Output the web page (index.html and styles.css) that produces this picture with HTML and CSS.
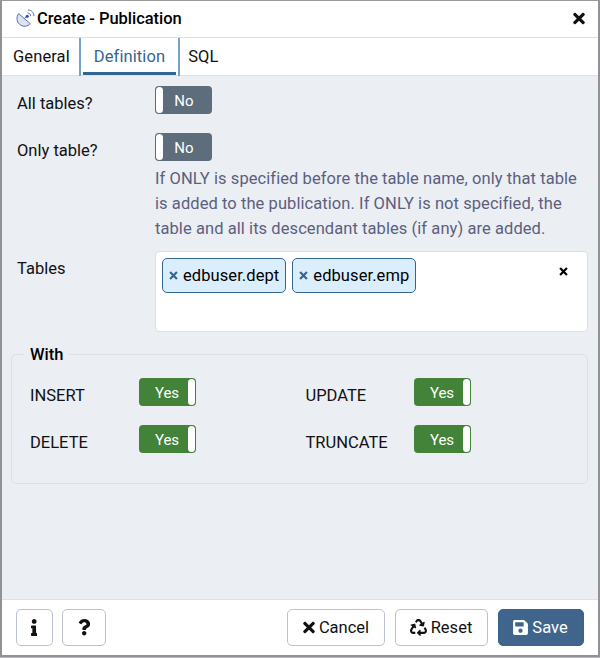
FILE: index.html
```html
<!DOCTYPE html>
<html lang="en">
<head>
<meta charset="utf-8">
<title>Create - Publication</title>
<link rel="stylesheet" href="styles.css">
</head>
<body>
<svg class="defs" width="0" height="0">
  <symbol id="times" viewBox="0 0 352 512"><path d="M242.72 256l100.07-100.07c12.28-12.28 12.28-32.19 0-44.48l-22.24-22.24c-12.28-12.28-32.19-12.28-44.48 0L176 189.28 75.93 89.21c-12.28-12.28-32.19-12.28-44.48 0L9.21 111.45c-12.28 12.28-12.28 32.19 0 44.48L109.28 256 9.21 356.07c-12.28 12.28-12.28 32.19 0 44.48l22.24 22.24c12.28 12.28 32.2 12.28 44.48 0L176 322.72l100.07 100.07c12.28 12.28 32.2 12.28 44.48 0l22.24-22.24c12.28-12.28 12.28-32.19 0-44.48L242.72 256z"/></symbol>
  <symbol id="cross" viewBox="0 0 10 10"><path d="M1.2 1.200l7.600 7.600M8.800 1.200l-7.600 7.600" fill="none" stroke="currentColor" stroke-width="2.400"/></symbol>
</svg>
<main class="dialog">
  <header class="titlebar">
    <svg class="dish" viewBox="0 0 19 19" fill="none" stroke="#5c6cb4" stroke-width="1">
      <path d="M2.700 4.600L14.200 14.700C11.800 17.700 7 18.200 3.700 15.500C.5 12.800.1 7.800 2.700 4.600Z" fill="#dce3f3"/>
      <path d="M8.300 9.500L11 7.300"/>
      <circle cx="11.200" cy="7.200" r="1.500" fill="#2447b5" stroke="none"/>
      <path d="M11.600 4.100C13.400 4 14.700 5.300 14.700 7.100M12 1.100C15.500.9 18 3.500 17.800 7"/>
    </svg>
    <h1 class="title">Create - Publication</h1>
    <svg class="close"><use href="#times"/></svg>
  </header>
  <nav class="tabs">
    <div class="tab">General</div>
    <div class="tab active"><span class="tab-label">Definition</span></div>
    <div class="tab">SQL</div>
  </nav>
  <section class="content">
    <div class="row">
      <div class="label">All tables?</div>
      <div class="switch off"><span class="knob"></span><span class="state">No</span></div>
    </div>
    <div class="row only">
      <div class="label">Only table?</div>
      <div class="control">
        <div class="switch off"><span class="knob"></span><span class="state">No</span></div>
        <p class="help">If ONLY is specified before the table name, only that table<br>is added to the publication. If ONLY is not specified, the<br>table and all its descendant tables (if any) are added.</p>
      </div>
    </div>
    <div class="row tables">
      <div class="label">Tables</div>
      <div class="select">
        <div class="chip"><svg class="remove"><use href="#cross"/></svg>edbuser.dept</div>
        <div class="chip"><svg class="remove"><use href="#cross"/></svg>edbuser.emp</div>
        <svg class="clear"><use href="#cross"/></svg>
      </div>
    </div>
    <fieldset class="group">
      <legend class="legend">With</legend>
      <div class="options">
        <div class="label">INSERT</div>
        <div class="switch on"><span class="state">Yes</span><span class="knob"></span></div>
        <div class="label">UPDATE</div>
        <div class="switch on"><span class="state">Yes</span><span class="knob"></span></div>
        <div class="label">DELETE</div>
        <div class="switch on"><span class="state">Yes</span><span class="knob"></span></div>
        <div class="label">TRUNCATE</div>
        <div class="switch on"><span class="state">Yes</span><span class="knob"></span></div>
      </div>
    </fieldset>
  </section>
  <footer class="footer">
    <div class="btn info"><svg width="6.400" height="17" viewBox="0 0 192 512"><path d="M20 424.229h20V279.771H20c-11.046 0-20-8.954-20-20V212c0-11.046 8.954-20 20-20h112c11.046 0 20 8.954 20 20v212.229h20c11.046 0 20 8.954 20 20V492c0 11.046-8.954 20-20 20H20c-11.046 0-20-8.954-20-20v-47.771c0-11.046 8.954-20 20-20zM96 0C56.235 0 24 32.235 24 72s32.235 72 72 72 72-32.235 72-72S135.764 0 96 0z"/></svg></div>
    <div class="btn question"><svg width="12.400" height="16.500" viewBox="0 0 384 512"><path d="M202.021 0C122.202 0 70.503 32.703 29.914 91.026c-7.363 10.58-5.093 25.086 5.178 32.874l43.138 32.709c10.373 7.865 25.132 6.026 33.253-4.148 25.049-31.381 43.630-49.449 82.757-49.449 30.764 0 68.816 19.799 68.816 49.631 0 22.552-18.617 34.134-48.993 51.164-35.423 19.860-82.299 44.576-82.299 106.405V320c0 13.255 10.745 24 24 24h72.471c13.255 0 24-10.745 24-24v-5.773c0-42.860 125.268-44.645 125.268-160.627C377.504 66.256 286.902 0 202.021 0zM192 373.459c-38.196 0-69.271 31.075-69.271 69.271 0 38.195 31.075 69.270 69.271 69.270s69.271-31.075 69.271-69.271-31.075-69.270-69.271-69.270z"/></svg></div>
    <div class="spacer"></div>
    <div class="btn cancel"><svg width="12" height="17"><use href="#times"/></svg>Cancel</div>
    <div class="btn reset"><svg width="17" height="17" viewBox="0 0 512 512"><path d="M184.561 261.903c3.232 13.997-12.123 24.635-24.068 17.168l-40.736-25.455-50.867 81.402C55.606 356.273 70.960 384 96.012 384H148c6.627 0 12 5.373 12 12v40c0 6.627-5.373 12-12 12H96.115c-75.334 0-121.302-83.048-81.408-146.880l50.822-81.388-40.725-25.448c-12.081-7.547-8.966-25.961 4.879-29.158l110.237-25.450c8.611-1.988 17.201 3.381 19.189 11.990l25.452 110.237zm98.561-182.915l41.289 66.076-40.740 25.457c-12.051 7.528-9 25.953 4.879 29.158l110.237 25.450c8.672 1.999 17.215-3.438 19.189-11.990l25.450-110.237c3.197-13.844-11.990-24.719-24.068-17.168l-40.687 25.424-41.263-66.082c-37.521-60.033-125.209-60.171-162.816 0l-17.963 28.766c-3.510 5.620-1.800 13.021 3.820 16.533l33.919 21.195c5.620 3.512 13.024 1.803 16.536-3.817l17.961-28.743c12.712-20.341 41.973-19.676 54.257-.022zM497.288 301.120l-27.515-44.065c-3.511-5.623-10.916-7.334-16.538-3.821l-33.861 21.159c-5.620 3.512-7.330 10.915-3.818 16.536l27.564 44.112c13.257 21.211-2.057 48.960-27.136 48.960H320V336.020c0-14.213-17.242-21.383-27.313-11.313l-80 79.981c-6.249 6.248-6.249 16.379 0 22.627l80 79.989C302.689 517.308 320 510.300 320 495.989V448h95.880c75.274 0 121.335-82.997 81.408-146.880z"/></svg>Reset</div>
    <div class="btn save"><svg width="15" height="17" viewBox="0 0 448 512"><path d="M433.941 129.941l-83.882-83.882A48 48 0 0 0 316.118 32H48C21.490 32 0 53.490 0 80v352c0 26.510 21.490 48 48 48h352c26.510 0 48-21.490 48-48V163.882a48 48 0 0 0-14.059-33.941zM224 416c-35.346 0-64-28.654-64-64 0-35.346 28.654-64 64-64s64 28.654 64 64c0 35.346-28.654 64-64 64zm96-304.520V212c0 6.627-5.373 12-12 12H76c-6.627 0-12-5.373-12-12V108c0-6.627 5.373-12 12-12h228.520c3.183 0 6.235 1.264 8.485 3.515l3.480 3.480A11.996 11.996 0 0 1 320 111.480z"/></svg>Save</div>
  </footer>
</main>
</body>
</html>
```
FILE: styles.css
```css
* { box-sizing: border-box; }
body {
  margin: 0;
  height: 658px;
  background: #b9b9bd;
  font-family: Roboto, sans-serif;
  font-size: 16.5px;
  line-height: 25px;
  color: #111;
  overflow: hidden;
}
.defs { position: absolute; }
svg { fill: currentColor; flex: none; }
.dialog {
  display: flex;
  flex-direction: column;
  height: 657px;
  background: #fff;
  border: 2px solid #929296;
  border-top: 1px solid #9b9b9e;
}
.titlebar {
  display: flex;
  align-items: center;
  height: 37px;
  padding: 0 13.5px 2px 14px;
  border-bottom: 1px solid #dcdee6;
}
.dish { width: 19px; height: 19px; fill: none; }
.title {
  flex: 1;
  margin: 0 0 0 2px;
  font-size: 16.5px;
  font-weight: 500;
  letter-spacing: -0.04px;
  color: #000;
}
.close { width: 12px; height: 17px; }
.tabs {
  display: flex;
  height: 38px;
  border-bottom: 1px solid #dde0e6;
}
.tab { padding: 6px 9px 0 11px; line-height: 25px; letter-spacing: 0.1px; }
.tab:last-child { padding-left: 8px; }
.tab.active {
  height: 38px;
  padding: 0 2px;
  border: solid #72a3cb;
  border-width: 0 2px;
  color: #326690;
}
.tab-label {
  display: block;
  height: 37px;
  padding: 6px 11px 0 11px;
  border-bottom: 3px solid #326690;
}
.content {
  flex: 1;
  padding: 10px 10px 0 9px;
  background: #ebeef3;
}
.row {
  display: grid;
  grid-template-columns: 138px 1fr;
  height: 47px;
  padding-left: 6px;
}
.row.only { height: 118px; }
.row.tables { height: 81px; }
.label { padding-top: 5px; }
.switch {
  display: flex;
  width: 57px;
  height: 28px;
  padding: 1px;
  border-radius: 4px;
  color: #fff;
  font-size: 15px;
  line-height: 28px;
}
.switch.off { background: #5e6d7b; }
.switch.on { background: #428339; padding: 1px 1px 1px 0; }
.knob { width: 7px; background: #fff; border-radius: 4px; }
.state { flex: 1; text-align: center; }
.off .state { padding-right: 6px; }
.on .state { padding-left: 8px; }
.help {
  margin: 5px 0 0;
  color: #5b5f80;
  letter-spacing: 0.07px;
  white-space: nowrap;
}
.select {
  display: flex;
  align-items: flex-start;
  gap: 6px;
  height: 81px;
  padding: 6px;
  background: #fff;
  border: 1px solid #dde0e6;
  border-radius: 4px;
}
.chip {
  display: flex;
  align-items: center;
  gap: 5px;
  height: 35px;
  padding: 0 6px;
  background: #daeefd;
  border: 1px solid #326690;
  border-radius: 5px;
  letter-spacing: 0.08px;
  color: #000;
}
.remove { width: 9px; height: 9px; color: #326690; }
.clear { width: 9px; height: 9px; margin: 9px 13px 0 auto; color: #000; }
.group {
  height: 142px;
  margin: 10px 0 0;
  padding: 0 0 0 18px;
  border: 1px solid #dde0e6;
  border-radius: 5px;
}
.legend {
  height: 25px;
  padding: 0 6px;
  margin-left: -6px;
  font-weight: 500;
  color: #000;
}
.options {
  display: grid;
  grid-template-columns: 108.5px 167px 108px 58px;
  grid-auto-rows: 46.5px;
  padding-top: 11px;
}
.footer {
  display: flex;
  align-items: center;
  height: 56px;
  padding: 0 14.5px 0 13.5px;
  border-top: 1px solid #dde0e6;
}
.btn {
  display: flex;
  align-items: center;
  justify-content: center;
  gap: 4px;
  height: 37px;
  border: 1px solid #bac1cd;
  border-radius: 5px;
}
.spacer { flex: 1; }
.info { width: 37px; }
.question { width: 44px; margin-left: 9.5px; }
.cancel { width: 98px; }
.reset { width: 93px; margin-left: 9.5px; }
.save {
  width: 86px;
  margin-left: 10px;
  background: #3f658c;
  border-color: #326690;
  color: #fff;
}
```
